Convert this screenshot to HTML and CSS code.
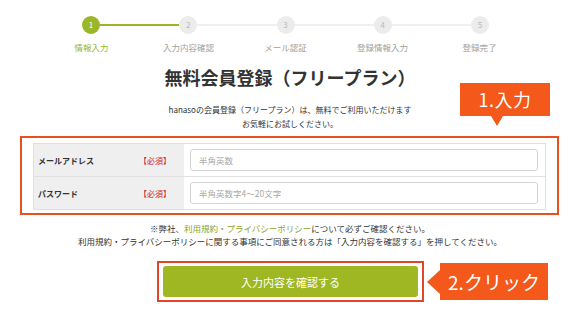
FILE: index.html
```html
<!DOCTYPE html>
<html lang="ja">
  <head>
    <meta charset="UTF-8" />
    <meta name="viewport" content="width=device-width, initial-scale=1.0" />
    <title>無料会員登録（フリープラン）</title>
    <link rel="stylesheet" href="styles.css">
  </head>
  <body>
    <div class="steps">
      <div class="track">
        <span class="dot active">1</span>
        <span class="bar done"></span>
        <span class="dot">2</span>
        <span class="bar"></span>
        <span class="dot">3</span>
        <span class="bar"></span>
        <span class="dot">4</span>
        <span class="bar"></span>
        <span class="dot">5</span>
      </div>
      <div class="labels">
        <span class="active">情報入力</span>
        <span>入力内容確認</span>
        <span>メール認証</span>
        <span>登録情報入力</span>
        <span>登録完了</span>
      </div>
    </div>

    <h1 class="title">無料会員登録（フリープラン）</h1>
    <p class="lead">hanasoの会員登録（フリープラン）は、無料でご利用いただけます<br>お気軽にお試しください。</p>

    <div class="form-area">
      <div class="callout callout-down">1.入力</div>
      <div class="form-box">
        <table class="form-table">
          <tr>
            <th><div class="field-name"><span>メールアドレス</span><em>【必須】</em></div></th>
            <td><input type="text" placeholder="半角英数" /></td>
          </tr>
          <tr>
            <th><div class="field-name"><span>パスワード</span><em>【必須】</em></div></th>
            <td><input type="password" placeholder="半角英数字4～20文字" /></td>
          </tr>
        </table>
      </div>
    </div>

    <p class="notes">※弊社、<a href="#">利用規約・プライバシーポリシー</a>について必ずご確認ください。<br>利用規約・プライバシーポリシーに関する事項にご同意される方は「入力内容を確認する」を押してください。</p>

    <div class="cta">
      <div class="cta-frame">
        <button type="button">入力内容を確認する</button>
      </div>
      <span class="arrow-left"></span>
      <div class="callout">2.クリック</div>
    </div>
  </body>
</html>
```

FILE: styles.css
```css
body {
  margin: 0;
  font-family: "Noto Sans CJK JP", "Noto Sans", sans-serif;
  color: #333;
  background: #fff;
}
.steps {
  width: 485px;
  margin-left: 43px;
  padding-top: 16px;
}
.track {
  display: flex;
  align-items: center;
  margin: 0 39px;
}
.dot {
  width: 18px;
  height: 18px;
  border-radius: 50%;
  background: #ececec;
  color: #b8b8b8;
  font-size: 8px;
  line-height: 18px;
  text-align: center;
  flex: none;
}
.dot.active {
  background: #9cb62a;
  color: #fff;
}
.bar {
  flex: 1;
  height: 2px;
  background: #f0f0f0;
}
.bar.done {
  background: #9cb62a;
}
.labels {
  display: grid;
  grid-template-columns: repeat(5, 97px);
  margin-top: 7px;
  font-size: 8.5px;
  line-height: 12px;
  color: #a0a0a0;
  text-align: center;
}
.labels .active {
  color: #9cb62a;
}
.title {
  margin: 12px 0 0;
  font-size: 18px;
  line-height: 24px;
  text-align: center;
  color: #333;
}
.lead {
  margin: 14px 0 0;
  font-size: 8px;
  line-height: 14px;
  text-align: center;
}
.form-area {
  position: relative;
  margin-top: 5px;
}
.form-box {
  margin: 0 21px 0 20px;
  padding: 5px 11px 3px;
  border: 2px solid #e9501f;
}
.form-table {
  width: 100%;
  border-collapse: collapse;
  border: 1px solid #e0e0e0;
}
.form-table th {
  width: 133px;
  padding: 0 13px 0 4px;
  background: #efefef;
  border-bottom: 1px solid #e0e0e0;
  font-size: 8px;
  text-align: left;
}
.form-table tr:last-child th,
.form-table tr:last-child td {
  border-bottom: none;
}
.field-name {
  display: flex;
  justify-content: space-between;
  white-space: nowrap;
}
.form-table em {
  font-style: normal;
  font-weight: normal;
  color: #d2232a;
}
.form-table td {
  height: 32px;
  padding: 0 7px 0 6px;
  border-bottom: 1px solid #e0e0e0;
}
.form-table input {
  box-sizing: border-box;
  display: block;
  width: 100%;
  height: 22px;
  padding: 0 8px;
  border: 1px solid #d4d4d4;
  border-radius: 3px;
  font-family: inherit;
  font-size: 8.5px;
}
.form-table input::placeholder {
  color: #aaa;
}
.callout {
  background: #f4581a;
  color: #fff;
  font-size: 18px;
  line-height: 34px;
  text-align: center;
  letter-spacing: 0.5px;
}
.callout-down {
  position: absolute;
  top: -53px;
  left: 460px;
  width: 90px;
  height: 33px;
  line-height: 33px;
}
.callout-down::after {
  content: "";
  position: absolute;
  top: 33px;
  left: 31px;
  border-top: 10px solid #f4581a;
  border-left: 6px solid transparent;
  border-right: 6px solid transparent;
}
.notes {
  margin: 7px 0 0;
  font-size: 8.5px;
  line-height: 13px;
  text-align: center;
}
.notes a {
  color: #8ca31f;
  text-decoration: none;
}
.cta {
  display: flex;
  align-items: center;
  margin-top: 13px;
  padding-left: 157px;
}
.cta-frame {
  padding: 3px 4px;
  border: 2px solid #e3452b;
}
.cta button {
  display: block;
  width: 255px;
  height: 31px;
  border: none;
  border-radius: 3px;
  background: #9eb722;
  color: #fff;
  font-family: inherit;
  font-size: 11px;
  cursor: pointer;
}
.arrow-left {
  margin-left: 3px;
  border-right: 13px solid #f4581a;
  border-top: 12px solid transparent;
  border-bottom: 12px solid transparent;
}
.cta .callout {
  width: 108px;
  height: 37px;
  line-height: 37px;
  font-size: 19px;
  letter-spacing: 0;
}
```
